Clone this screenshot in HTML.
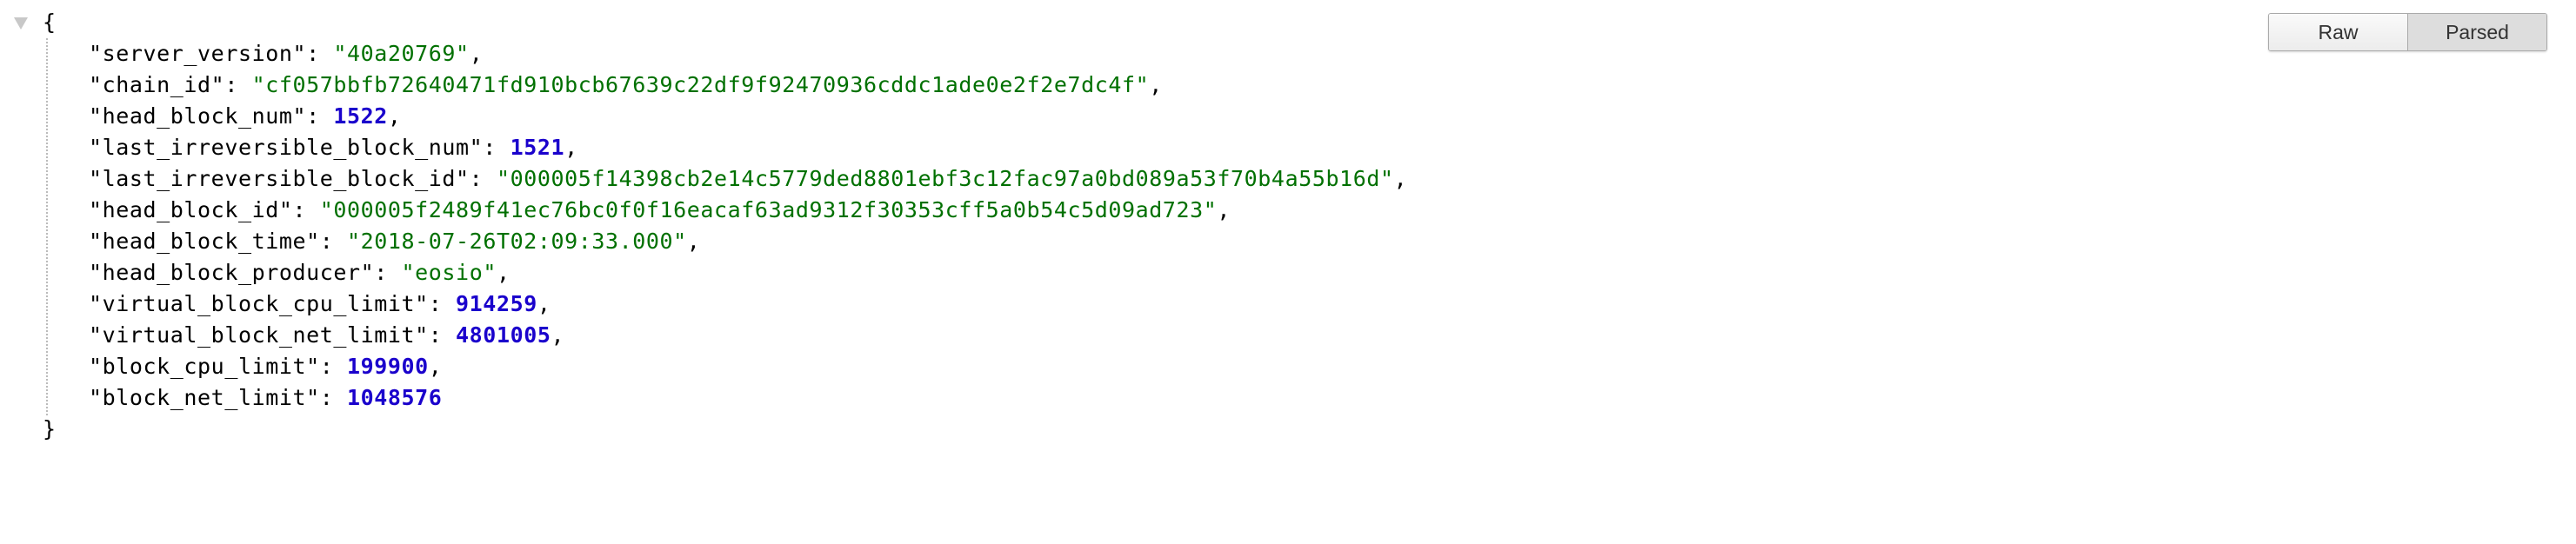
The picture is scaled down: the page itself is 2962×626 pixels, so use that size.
<!DOCTYPE html>
<html><head><meta charset="utf-8"><style>
html,body{margin:0;padding:0;background:#fff;width:2962px;height:626px;overflow:hidden}
.code{position:absolute;left:0;top:0;font-family:"DejaVu Sans Mono","Liberation Mono",monospace;font-size:25px;letter-spacing:0.58px;line-height:36px;color:#000;white-space:pre}
.l{position:absolute;white-space:pre}
.s{color:#007000}
.n{color:#1a01cc;font-weight:bold}
.tri{position:absolute;left:16px;top:20px;width:0;height:0;border-left:8px solid transparent;border-right:8px solid transparent;border-top:14px solid #c8c8c8}
.dots{position:absolute;left:53px;top:44px;height:434px;border-left:2px dotted #bbb}
.btns{position:absolute;left:2608px;top:15px;width:319px;height:42px;border:1px solid #aaa;border-radius:3px;display:flex;font-family:"Liberation Sans",sans-serif;font-size:23px;color:#333;box-shadow:0 1px 2px rgba(0,0,0,.15);overflow:hidden}
.btns div{display:flex;align-items:center;justify-content:center}
.raw{width:159px;background:linear-gradient(#fafafa,#ececec);border-right:1px solid #aaa}
.parsed{flex:1;background:#ddd}
</style></head><body>
<div class="tri"></div>
<div class="dots"></div>
<div class="code">
<div class="l" style="left:49px;top:8px">{</div>
<div class="l" style="left:102px;top:44px">"server_version": <span class="s">"40a20769"</span>,</div>
<div class="l" style="left:102px;top:80px">"chain_id": <span class="s">"cf057bbfb72640471fd910bcb67639c22df9f92470936cddc1ade0e2f2e7dc4f"</span>,</div>
<div class="l" style="left:102px;top:116px">"head_block_num": <span class="n">1522</span>,</div>
<div class="l" style="left:102px;top:152px">"last_irreversible_block_num": <span class="n">1521</span>,</div>
<div class="l" style="left:102px;top:188px">"last_irreversible_block_id": <span class="s">"000005f14398cb2e14c5779ded8801ebf3c12fac97a0bd089a53f70b4a55b16d"</span>,</div>
<div class="l" style="left:102px;top:224px">"head_block_id": <span class="s">"000005f2489f41ec76bc0f0f16eacaf63ad9312f30353cff5a0b54c5d09ad723"</span>,</div>
<div class="l" style="left:102px;top:260px">"head_block_time": <span class="s">"2018-07-26T02:09:33.000"</span>,</div>
<div class="l" style="left:102px;top:296px">"head_block_producer": <span class="s">"eosio"</span>,</div>
<div class="l" style="left:102px;top:332px">"virtual_block_cpu_limit": <span class="n">914259</span>,</div>
<div class="l" style="left:102px;top:368px">"virtual_block_net_limit": <span class="n">4801005</span>,</div>
<div class="l" style="left:102px;top:404px">"block_cpu_limit": <span class="n">199900</span>,</div>
<div class="l" style="left:102px;top:440px">"block_net_limit": <span class="n">1048576</span></div>
<div class="l" style="left:49px;top:476px">}</div>
</div>
<div class="btns"><div class="raw">Raw</div><div class="parsed">Parsed</div></div>
</body></html>
